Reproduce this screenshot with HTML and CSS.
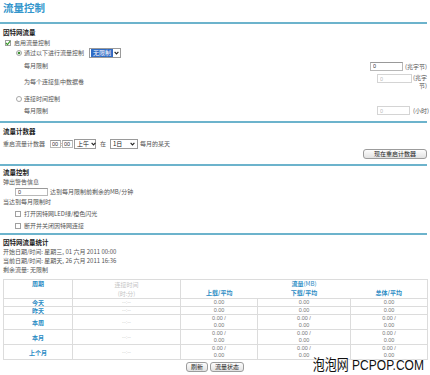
FILE: index.html
```html
<!DOCTYPE html>
<html lang="zh-CN">
<head>
    <meta charset="UTF-8">
    <meta name="viewport" content="width=device-width, initial-scale=1.0">
    <title>流量控制</title>
    <link rel="stylesheet" href="styles.css">
</head>
<body>
<div class="page">
    <h1 class="title">流量控制</h1>
    <div class="rule"></div>

    <!-- 因特网流量 -->
    <div class="sec sec-inet">
        <h2>因特网流量</h2>
        <div class="row r-enable">
            <span class="cb on"><svg width="6" height="6" viewBox="0 0 6 6"><path d="M1 3 L2.5 4.6 L5.2 1" fill="none" stroke="#3a9a2a" stroke-width="1.2"/></svg></span>
            启用流量控制
        </div>
        <div class="row r-mode">
            <span class="rd on"></span>
            通过以下进行流量控制
            <span class="sel sel-limit"><span class="sel-val hl">无限制</span><span class="arrow"><svg width="5" height="4" viewBox="0 0 5 4"><path d="M0.6 0.8 L2.5 2.9 L4.4 0.8" fill="none" stroke="#222" stroke-width="1.1"/></svg></span></span>
        </div>
        <div class="row r-tall">
            <span class="lbl">每月限制</span>
            <span class="right">
                <input class="field f-main" type="text" value="0">
                <span class="unit u-main">(兆字节)</span>
            </span>
        </div>
        <div class="row r-tall r-top">
            <span class="lbl lbl-mid">为每个连接集中数据卷</span>
            <span class="right">
                <input class="field f-off" type="text" value="0" disabled>
                <span class="unit u-wrap">(兆字<br>节)</span>
            </span>
        </div>
        <div class="row r-time">
            <span class="rd"></span>
            连接时间控制
        </div>
        <div class="row r-hours">
            <span class="lbl">每月限制</span>
            <span class="right">
                <input class="field f-off f-hours" type="text" value="0" disabled>
                <span class="unit u-hours">(小时)</span>
            </span>
        </div>
    </div>
    <div class="rule"></div>

    <!-- 流量计数器 -->
    <div class="sec sec-counter">
        <h2>流量计数器</h2>
        <div class="row r-restart">
            重启流量计数器
            <input class="field f-time" type="text" value="00"><span class="colon">:</span><input class="field f-time" type="text" value="00">
            <span class="sel sel-ampm"><span class="sel-val">上午</span><span class="arrow"><svg width="5" height="4" viewBox="0 0 5 4"><path d="M0.6 0.8 L2.5 2.9 L4.4 0.8" fill="none" stroke="#222" stroke-width="1.1"/></svg></span></span>
            <span class="at">在</span>
            <span class="sel sel-day"><span class="sel-val">1日</span><span class="arrow"><svg width="5" height="4" viewBox="0 0 5 4"><path d="M0.6 0.8 L2.5 2.9 L4.4 0.8" fill="none" stroke="#222" stroke-width="1.1"/></svg></span></span>
            每月的某天
        </div>
        <div class="row r-btn">
            <button class="btn btn-reset" type="button">现在重启计数器</button>
        </div>
    </div>
    <div class="rule"></div>

    <!-- 流量控制 -->
    <div class="sec sec-ctrl">
        <h2>流量控制</h2>
        <div class="row r-line">弹出警告信息</div>
        <div class="row r-warn">
            <input class="field f-warn" type="text" value="0">
            达到每月限制前剩余的MB/分钟
        </div>
        <div class="row r-line">当达到每月限制时</div>
        <div class="row r-opt">
            <span class="cb"></span>打开因特网LED绿/橙色闪光
        </div>
        <div class="row r-opt r-opt2">
            <span class="cb"></span>断开并关闭因特网连接
        </div>
    </div>
    <div class="rule"></div>

    <!-- 因特网流量统计 -->
    <div class="sec sec-stats">
        <h2>因特网流量统计</h2>
        <div class="row r-line">开始日期/时间: 星期三, 01 六月 2011 00:00</div>
        <div class="row r-line">当前日期/时间: 星期天, 26 六月 2011 16:36</div>
        <div class="row r-line">剩余流量: 无限制</div>

        <table class="stats">
            <colgroup>
                <col class="c-period"><col class="c-conn"><col class="c-up"><col class="c-down"><col class="c-total">
            </colgroup>
            <tr class="th1">
                <th class="period" rowspan="2">周期</th>
                <th class="conn" rowspan="2">连接时间<br>(时:分)</th>
                <th class="traffic" colspan="3"><b>流量</b>(MB)</th>
            </tr>
            <tr class="th2">
                <th class="up">上载/平均</th>
                <th class="down">下载/平均</th>
                <th class="total">总体/平均</th>
            </tr>
            <tr class="one">
                <td class="name">今天</td><td class="dash">--:--</td><td>0.00</td><td>0.00</td><td>0.00</td>
            </tr>
            <tr class="one">
                <td class="name">昨天</td><td class="dash">--:--</td><td>0.00</td><td>0.00</td><td>0.00</td>
            </tr>
            <tr class="two">
                <td class="name">本周</td><td class="dash">--:--</td><td>0.00 /<br>0.00</td><td>0.00 /<br>0.00</td><td>0.00 /<br>0.00</td>
            </tr>
            <tr class="two">
                <td class="name">本月</td><td class="dash">--:--</td><td>0.00 /<br>0.00</td><td>0.00 /<br>0.00</td><td>0.00 /<br>0.00</td>
            </tr>
            <tr class="two">
                <td class="name">上个月</td><td class="dash">--:--</td><td>0.00 /<br>0.00</td><td>0.00 /<br>0.00</td><td>0.00 /<br>0.00</td>
            </tr>
        </table>

        <div class="actions">
            <button class="btn" type="button">刷新</button>
            <button class="btn" type="button">流量状态</button>
        </div>
    </div>

    <div class="watermark">泡泡网 PCPOP.COM</div>
</div>
</body>
</html>
```

FILE: styles.css
```css
body {
    margin: 0;
    background: #fff;
    font-family: "Noto Sans CJK SC", "Liberation Sans", sans-serif;
    font-size: 6px;
    color: #555;
}
.page {
    position: relative;
    width: 430px;
    height: 375px;
    overflow: hidden;
}
.title {
    margin: 0;
    padding-left: 3px;
    height: 22px;
    font-size: 10.5px;
    line-height: 15px;
    color: #3496cc;
    font-weight: bold;
}
.rule {
    height: 2px;
    margin-right: 3px;
    background: #6cb3cc;
}
.sec {
    padding: 0 3px;
}
.sec h2 {
    margin: 0;
    height: 10px;
    font-size: 6.5px;
    line-height: 10px;
    color: #222;
    font-weight: bold;
}
.row {
    display: flex;
    align-items: center;
    height: 10px;
    line-height: 8px;
    white-space: nowrap;
}
.right {
    margin-left: auto;
    display: flex;
    align-items: flex-start;
}
.lbl {
    padding-left: 21px;
}

/* form bits */
.field {
    box-sizing: border-box;
    height: 9px;
    margin: 0;
    padding: 0 2px;
    border: 1px solid #b8b8b8;
    border-top-color: #999;
    font: 5.5px "Liberation Sans", sans-serif;
    color: #333;
    background: #fff;
    outline: none;
}
.field:disabled {
    border-color: #d4d4d4;
    color: #bbb;
}
.cb {
    box-sizing: border-box;
    display: inline-flex;
    align-items: center;
    justify-content: center;
    width: 6px;
    height: 6px;
    margin-right: 3px;
    border: 1px solid #a0a0a0;
    background: #fff;
}
.cb svg {
    display: block;
    margin: -1px;
}
.rd {
    box-sizing: border-box;
    display: inline-block;
    width: 6px;
    height: 6px;
    margin: 0 2px 0 13px;
    border: 1px solid #a8a8a8;
    border-radius: 50%;
    background: #fff;
}
.rd.on {
    background: radial-gradient(circle, #3f8f34 0 1.2px, #e8f2e6 1.6px);
}
.sel {
    box-sizing: border-box;
    display: inline-flex;
    align-items: center;
    height: 10px;
    border: 1px solid #9a9a9a;
    background: #fff;
    color: #222;
}
.sel-val {
    padding: 0 2px;
    line-height: 8px;
}
.sel-val.hl {
    background: #2f6bc4;
    color: #fff;
    margin-left: 1px;
}
.arrow {
    display: flex;
    align-items: center;
    justify-content: center;
    margin-left: auto;
    width: 9px;
}
.btn {
    box-sizing: border-box;
    height: 10px;
    padding: 0 4px;
    border: 1px solid #9c9c9c;
    border-radius: 3px;
    background: linear-gradient(#fdfdfd, #e2e2e2);
    font: 6px "Noto Sans CJK SC", sans-serif;
    line-height: 8px;
    color: #222;
}

/* section 1 */
.sec-inet {
    padding-top: 3px;
    padding-bottom: 5px;
}
.r-enable {
    height: 11px;
    padding-left: 2px;
}
.sel-limit {
    width: 32px;
    margin-left: 5px;
}
.r-tall {
    height: 16px;
}
.r-top {
    align-items: flex-start;
}
.r-top .lbl-mid {
    align-self: center;
}
.f-main {
    width: 33px;
}
.u-main {
    width: 22px;
    margin-left: 2px;
    line-height: 9px;
    text-align: right;
}
.f-off {
    width: 35px;
}
.u-wrap {
    width: 15px;
    line-height: 8px;
    text-align: right;
}
.r-time {
    margin-top: 4px;
}
.r-hours {
    margin-top: 2px;
    align-items: flex-start;
}
.r-hours .lbl {
    align-self: center;
}
.f-hours {
    width: 33px;
}
.u-hours {
    width: 14px;
    margin-left: 3px;
    line-height: 9px;
    text-align: right;
}

/* section 2 */
.sec-counter {
    padding-top: 3px;
    padding-bottom: 5px;
}
.r-restart {
    margin-top: 3px;
}
.f-time {
    width: 11px;
    height: 8px;
    padding: 0 1px;
}
.r-restart .f-time:first-of-type {
    margin-left: 5px;
}
.colon {
    width: 1px;
    text-align: center;
}
.sel-ampm {
    width: 22px;
    margin-left: 1px;
}
.sel-day {
    width: 28px;
    margin: 0 2px 0 0;
}
.at {
    width: 14px;
    text-align: center;
}
.r-btn {
    justify-content: flex-end;
}
.btn-reset {
    width: 64px;
}

/* section 3 */
.sec-ctrl {
    padding-top: 2px;
    padding-bottom: 2px;
}
.sec-ctrl h2 {
    height: 9px;
    line-height: 9px;
}
.r-line {
    height: 9px;
}
.r-warn {
    margin-top: 1px;
}
.f-warn {
    width: 33px;
    height: 8px;
    margin: 0 2px 0 12px;
}
.r-opt {
    margin-top: 3px;
}
.r-opt2 {
    margin-top: 2px;
}
.r-opt .cb {
    margin-left: 12px;
}

/* section 4 */
.sec-stats {
    padding-top: 2px;
}
.stats {
    width: 424px;
    margin-top: 5px;
    border-collapse: collapse;
    table-layout: fixed;
}
.c-period { width: 69px; }
.c-conn { width: 108px; }
.c-up { width: 77px; }
.c-down { width: 93px; }
.c-total { width: 77px; }
.stats th,
.stats td {
    padding: 0;
    border: 1px solid #dcdcdc;
    text-align: center;
    font-family: "Liberation Sans", "Noto Sans CJK SC", sans-serif;
    font-size: 5.5px;
    line-height: 7px;
    color: #777;
}
.stats th {
    font-family: "Noto Sans CJK SC", sans-serif;
    color: #2b8cc4;
    font-size: 6px;
    line-height: 8px;
    vertical-align: top;
}
.stats .th1 th {
    height: 8px;
}
.stats .th2 th {
    height: 8px;
}
.stats .conn {
    font-weight: normal;
    color: #c4c4c4;
    line-height: 9px;
}
.stats .traffic {
    font-weight: normal;
    border-bottom-style: hidden;
}
.stats .th2 th {
    border-top-style: hidden;
}
.stats .down,
.stats .total {
    border-left-style: hidden;
}
.stats .name {
    font-family: "Noto Sans CJK SC", sans-serif;
    font-size: 6px;
    line-height: 7px;
    font-weight: bold;
    color: #2b8cc4;
}
.stats .dash {
    color: #c8c8c8;
}
.stats .one td {
    height: 6px;
}
.stats .two td {
    height: 14px;
}
.actions {
    display: flex;
    justify-content: center;
    gap: 2px;
    margin-top: 2px;
}

.watermark {
    position: absolute;
    right: 6px;
    bottom: 2px;
    font-family: "Liberation Sans", "Noto Sans CJK SC", sans-serif;
    font-size: 15px;
    line-height: 17px;
    color: #111;
    text-shadow: 0 0 2px #fff, 0 0 2px #fff;
    transform: scaleX(0.8);
    transform-origin: right bottom;
    white-space: nowrap;
}
```
